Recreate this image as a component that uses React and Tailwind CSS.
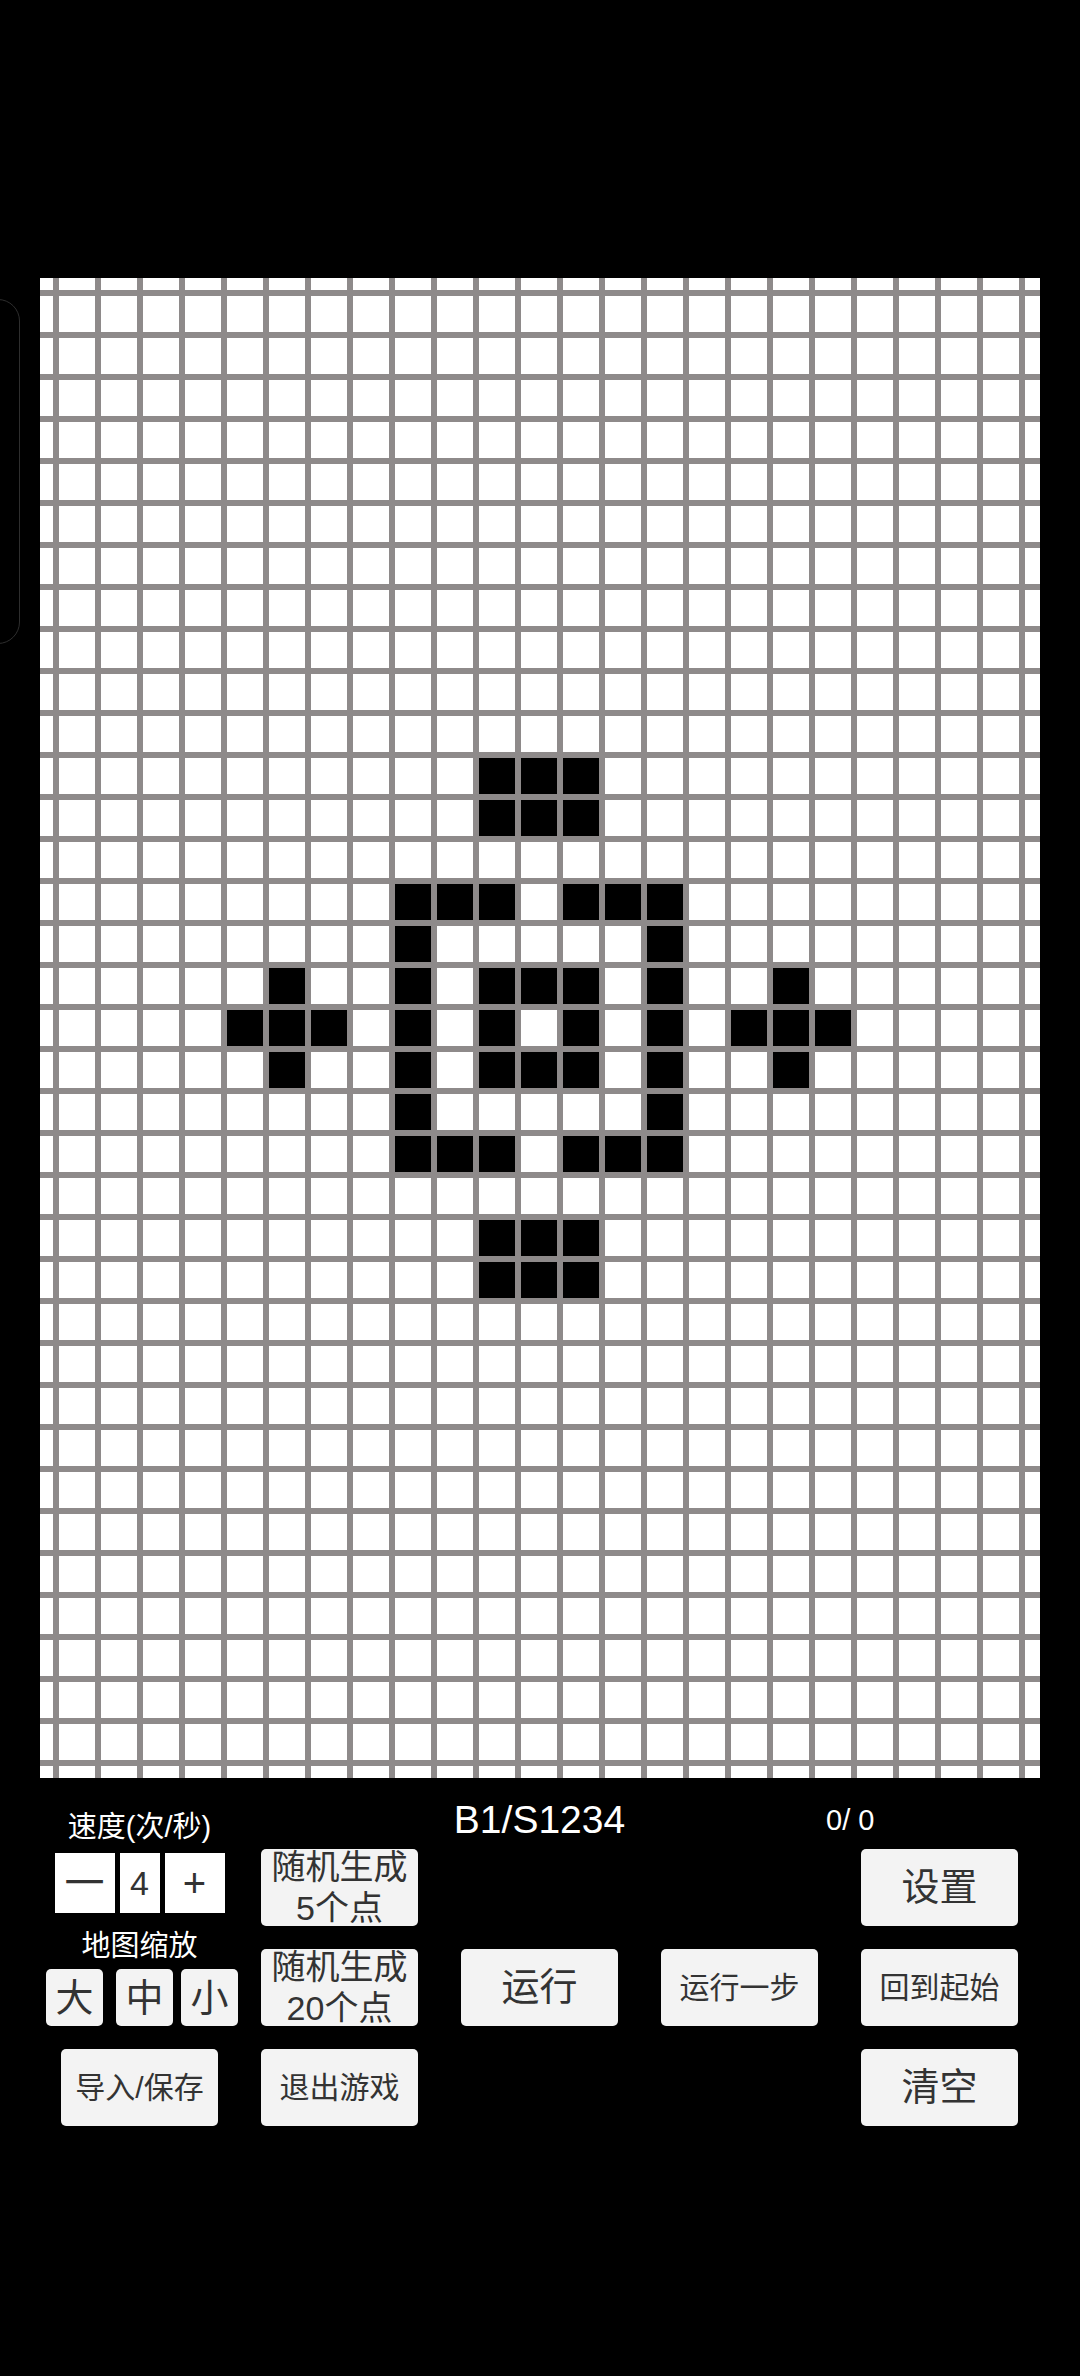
const LIVE = {
  11: [10, 11, 12],
  12: [10, 11, 12],
  14: [8, 9, 10, 12, 13, 14],
  15: [8, 14],
  16: [5, 8, 10, 11, 12, 14, 17],
  17: [4, 5, 6, 8, 10, 12, 14, 16, 17, 18],
  18: [5, 8, 10, 11, 12, 14, 17],
  19: [8, 14],
  20: [8, 9, 10, 12, 13, 14],
  22: [10, 11, 12],
  23: [10, 11, 12],
};

const ROWS = 37;
const COLS = 25;

function Board() {
  const cells = [];
  for (let i = 0; i < ROWS; i++) {
    for (let j = 0; j < COLS; j++) {
      const alive = (LIVE[i - 1] || []).includes(j - 1);
      cells.push(<div key={`${i}-${j}`} className={alive ? "bg-black" : "bg-white"} />);
    }
  }
  return (
    <div className="ml-[40px] grid h-[1500px] w-[1000px] grid-cols-[13px_repeat(23,36px)_15px] grid-rows-[12px_repeat(35,36px)_12px] gap-[6px] bg-[#8e8a8a]">
      {cells}
    </div>
  );
}

function Btn({ children, size = "text-[30px]", className = "" }) {
  return (
    <button
      type="button"
      className={`flex h-[77px] w-[157px] flex-col items-center justify-center rounded-[5px] bg-[#f3f3f3] text-[#333] ${size} ${className}`}
    >
      {children}
    </button>
  );
}

function SpeedBox({ children, w, size }) {
  return (
    <div className={`flex h-[60px] items-center justify-center bg-white leading-none text-[#333] ${w} ${size}`}>
      {children}
    </div>
  );
}

function ZoomBtn({ children, className = "" }) {
  return (
    <button
      type="button"
      className={`flex h-[57px] w-[57px] items-center justify-center rounded-[5px] bg-[#f3f3f3] text-[38px] leading-none text-[#333] ${className}`}
    >
      {children}
    </button>
  );
}

export default function App() {
  return (
    <div className="relative h-[2376px] w-[1080px] overflow-hidden bg-black pt-[278px] font-['Liberation_Sans','Noto_Sans_CJK_SC',sans-serif]">
      <div className="absolute left-[-30px] top-[299px] h-[345px] w-[50px] rounded-[22px] border-[1.5px] border-[#2e2e2e]" />

      <Board />

      <div className="mt-[22px] flex items-start gap-[43px] pl-[61px]">
        {/* speed + zoom column */}
        <div className="flex w-[157px] flex-col items-center">
          <div className="mt-[13px] whitespace-nowrap text-[29px] leading-none text-white">速度(次/秒)</div>
          <div className="mt-[11px] flex gap-[5px]">
            <SpeedBox w="w-[60px]" size="text-[40px]">一</SpeedBox>
            <SpeedBox w="w-[40px]" size="text-[34px]">4</SpeedBox>
            <SpeedBox w="w-[60px]" size="text-[40px]">+</SpeedBox>
          </div>
          <div className="mt-[19px] whitespace-nowrap text-[29px] leading-none text-white">地图缩放</div>
          <div className="ml-[5px] mt-[8px] flex">
            <ZoomBtn>大</ZoomBtn>
            <ZoomBtn className="ml-[13px]">中</ZoomBtn>
            <ZoomBtn className="ml-[8px]">小</ZoomBtn>
          </div>
          <Btn className="mt-[23px]">导入/保存</Btn>
        </div>

        <div className="flex flex-col">
          <div className="flex h-[49px] items-start text-white">
            <div className="w-[157px]" />
            <div className="ml-[43px] flex w-[157px] justify-center">
              <span className="whitespace-nowrap text-[39px] leading-none">B1/S1234</span>
            </div>
            <div className="ml-[208px] mt-[6px] whitespace-nowrap text-[29px] leading-none">0/ 0</div>
          </div>
          <div className="grid grid-cols-[157px_157px_157px_157px] grid-rows-[77px_77px_77px] gap-x-[43px] gap-y-[23px]">
            <Btn size="text-[34px] leading-[41px]">
              <span>随机生成</span>
              <span>5个点</span>
            </Btn>
            <div />
            <div />
            <Btn size="text-[38px]">设置</Btn>

            <Btn size="text-[34px] leading-[41px]">
              <span>随机生成</span>
              <span>20个点</span>
            </Btn>
            <Btn size="text-[38px]">运行</Btn>
            <Btn>运行一步</Btn>
            <Btn>回到起始</Btn>

            <Btn>退出游戏</Btn>
            <div />
            <div />
            <Btn size="text-[38px]">清空</Btn>
          </div>
        </div>
      </div>
    </div>
  );
}
